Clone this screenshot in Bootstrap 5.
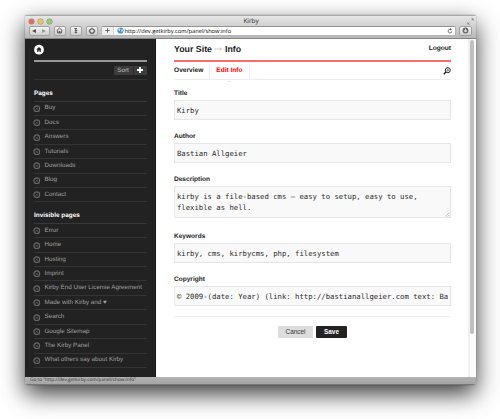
<!DOCTYPE html>
<html lang="en">
<head>
<meta charset="utf-8">
<title>Kirby</title>
<link href="https://cdn.jsdelivr.net/npm/bootstrap@5.3.0/dist/css/bootstrap.min.css" rel="stylesheet">
<style>
html,body{width:500px;height:419px;overflow:hidden;background:#fff}
body{font:6.6px/1 "Liberation Sans",Arial,sans-serif;color:#222;padding:15px 24.5px 0 25px;text-rendering:geometricPrecision}
svg{display:block;flex:none}
.win{height:369.5px;border-radius:2px 2px 3px 3px;box-shadow:0 0 1px rgba(0,0,0,.75),0 9px 23px rgba(0,0,0,.78);overflow:hidden;background:#fff}
.chrome{height:23.5px;background:linear-gradient(#e6e6e6,#b8b8b8);border-bottom:1px solid #858585;border-top:.5px solid #aaa}
.titlebar{height:10px;padding:0 2px 0 3.5px}
.titlebar .ttl{font:6.4px/10px "Open Sans","Lucida Grande",sans-serif;color:#222}
.dot{width:5px;height:5px;border-radius:50%;box-shadow:0 0 0 .5px rgba(0,0,0,.35)}
.dot-r{background:#f06a5e}.dot-y{background:#f5c053}.dot-g{background:#8fce68}
.tools{height:11.5px;padding:0 3.5px 2px 3.5px}
.tbtn{height:9.5px;border:1px solid #a2a2a2;border-radius:2px;background:linear-gradient(#f4f4f4,#cfcfcf);color:#444;padding:0}
.addr{height:9.5px;background:#fff;border:1px solid #b4b4b4;border-top-color:#929292;border-radius:2px;font:5.7px/8px "Open Sans",sans-serif;color:#000}
.plus{width:12px;height:8px;background:#f0f0f0;border-right:1px solid #d0d0d0;color:#555}
.side{width:131px;background:#222;padding:5px 8.5px 0 9px;color:#a0a0a0;border-right:1px solid #161616}
.sidebar-head{height:18px;border-bottom:2px solid #999}
.sortrow{height:18.5px;border-bottom:1px solid #333}
.sort{height:9.5px;background:#3c3c3c;border-radius:1px;color:#bbb;font-size:6.2px;line-height:9.5px}
.sort .lb{width:20px;text-align:center;border-right:1px solid #2d2d2d}
.sort .pl{width:13px}
.side h2{font-size:6.4px;font-weight:700;color:#fff;margin:0;height:21.5px;padding-top:9.5px;border-bottom:1px solid #383838;line-height:7px}
.item{height:14.42px;border-bottom:1px solid #343434;font-size:6.27px;gap:4px;white-space:nowrap;padding-top:.6px}
.item svg{margin-left:-1px}
.main{padding:0 0 0 18px}
.content{width:277px}
.mhead{height:23.5px;border-bottom:2px solid #ff6a6a;padding-top:1px}
.mhead .h{font-size:8.8px;font-weight:700}
.mhead .arr{display:inline-block;margin:0 2.5px 1.8px}
.tabs{height:18px;border-bottom:1px solid #eee;font-weight:700;font-size:6.6px;padding-top:1px}
.tab2{position:relative;color:#f00;border-left:1px solid #eee;border-right:1px solid #eee;padding:0 6px;margin-left:6px;height:17px;line-height:16px;font-size:6.55px}
.tab2::after{content:"";position:absolute;left:50%;bottom:-2px;margin-left:-1.5px;border:1.5px solid transparent;border-top-color:#bbb;border-bottom:0}
.fld{height:43px}
.fld label{display:block;font-weight:700;font-size:6.55px;line-height:8px;height:11px;padding-top:.8px}
.fld .box{height:20px;border:1px solid #e6e6e6;border-radius:0;background:#f9f9f9;padding:0 2px;font:7.27px/11px "DejaVu Sans Mono",monospace;color:#2a2a2a;overflow:hidden;white-space:pre;display:flex;align-items:center;position:relative}
.fld.tall{height:57px}.fld.tall .box{height:32px}
.fld .grip{position:absolute;right:0;bottom:0}
.acts{border-top:1.5px solid #f0f0f0;margin-top:-2.5px;padding-top:9px}
.acts .btn{font-size:6.4px;line-height:12.5px;height:12.5px;padding:0;border:0;border-radius:1px}
.cancel{width:35px;background:#ddd;color:#333}.cancel:hover{background:#ddd}
.save{width:31px;background:#222;color:#fff;font-weight:700}
.track{width:7.5px;background:#fbfbfb;border-left:2px solid #f0f0f0;padding:1.5px 0 0 0}
.thumb{width:3.5px;height:294px;border-radius:2px;background:#c0c0c0}
.page{height:338.5px}
.status{height:7.5px;background:linear-gradient(#b3b3b3,#a6a6a6);font:4.75px/7px "Open Sans",sans-serif;color:#333;padding-left:5px;border-bottom:.5px solid #777}
</style>
<script src="https://cdn.jsdelivr.net/npm/bootstrap@5.3.0/dist/js/bootstrap.bundle.min.js"></script>
</head>
<body>
<svg width="0" height="0" class="position-absolute"><defs>
<symbol id="x" viewBox="0 0 8 8"><circle cx="4" cy="4" r="3.1" fill="none" stroke="#666" stroke-width="1.3"/><path d="M2.9 2.9 5.1 5.1M5.1 2.9 2.9 5.1" stroke="#666" stroke-width=".8"/></symbol>
</defs></svg>
<div class="win d-flex flex-column">
 <header class="chrome">
  <div class="titlebar d-flex align-items-center">
   <div class="d-flex" style="gap:4px"><i class="dot dot-r"></i><i class="dot dot-y"></i><i class="dot dot-g"></i></div>
   <div class="ttl flex-fill text-center pe-3">Kirby</div>
   <svg width="7" height="7" viewBox="0 0 7 7"><path d="M4 .5h2.5V3zM.5 4v2.5H3z" fill="#777"/><path d="M6 1 1 6" stroke="#888" stroke-width=".6" stroke-dasharray="2 2.8 2"/></svg>
  </div>
  <div class="tools d-flex align-items-center">
   <div class="tbtn d-flex align-items-center justify-content-around" style="width:21.5px"><svg width="4" height="4" viewBox="0 0 4 4"><path d="M4 0v4L0 2z" fill="#555"/></svg><svg width="4" height="4" viewBox="0 0 4 4"><path d="M0 0v4l4-2z" fill="#999"/></svg></div>
   <div class="tbtn d-flex align-items-center justify-content-center" style="width:12.5px;margin-left:3.5px"><svg width="7" height="7" viewBox="0 0 7 7"><path d="M.6 3.7 3.5 1l2.9 2.7M1.6 3.3V6h3.8V3.3M3 6V4.5h1V6" fill="none" stroke="#444" stroke-width=".8"/></svg></div>
   <div class="tbtn d-flex align-items-center justify-content-center" style="width:12.5px;margin-left:3.5px"><svg width="6" height="7" viewBox="0 0 6 7"><path d="M1.4 1.5h2.4L1.9 3.4h2L2 5.7h2.2" fill="none" stroke="#444" stroke-width=".9"/></svg></div>
   <div class="tbtn d-flex align-items-center justify-content-center" style="width:12px;margin-left:3.5px"><svg width="8" height="8" viewBox="0 0 8 8"><circle cx="4" cy="4" r="2.3" fill="none" stroke="#555" stroke-width="1.1"/><path d="M4 .6v1M4 6.4v1M.6 4h1M6.4 4h1" stroke="#555" stroke-width=".8"/></svg></div>
   <div class="addr flex-fill d-flex align-items-center" style="margin-left:3.5px">
    <div class="plus d-flex align-items-center justify-content-center"><svg width="5" height="5" viewBox="0 0 5 5"><path d="M2.5.3v4.4M.3 2.5h4.4" stroke="#555" stroke-width=".9"/></svg></div>
    <svg width="7" height="7" viewBox="0 0 7 7" style="margin:0 1px 0 2.5px"><circle cx="3.5" cy="3.5" r="3.1" fill="#4b8fd0"/><path d="M1.2 1.8 3 1.2l.5 1.4-1.2 1.6zM4.3 2.4l1.7.2-.4 2-1.2.6z" fill="#d7e8f6"/></svg>
    <span class="flex-fill">http://dev.getkirby.com/panel/show:info</span>
    <svg width="6" height="6" viewBox="0 0 6 6" style="margin-right:2px"><path d="M4.9 3.3A1.9 1.9 0 1 1 3.4 1.2" fill="none" stroke="#555" stroke-width=".8"/><path d="M3 0l2 1.3L3 2.6z" fill="#555"/></svg>
   </div>
   <div class="tbtn d-flex align-items-center justify-content-center" style="width:13px;margin-left:3.5px"><svg width="7" height="7" viewBox="0 0 7 7"><circle cx="3.5" cy="3.5" r="2.9" fill="#666"/><path d="M3.5 1.7v2.8M2.3 3.7l1.2 1.4 1.2-1.4z" stroke="#eee" stroke-width=".8" fill="#eee"/></svg></div>
  </div>
 </header>
 <div class="page d-flex">
  <nav class="side flex-shrink-0">
   <div class="sidebar-head"><svg width="10" height="12" viewBox="0 0 10 12"><circle cx="5" cy="5.7" r="4.9" fill="#fff"/><path d="M5 3.1 2.4 5.6h.8v2.3h1.2V6.4h1.2v1.5h1.2V5.6h.8z" fill="#222"/></svg></div>
   <div class="sortrow d-flex align-items-center justify-content-end"><div class="sort d-flex"><span class="lb">Sort</span><span class="pl d-flex align-items-center justify-content-center"><svg width="6" height="6" viewBox="0 0 6 6"><path d="M3 0v6M0 3h6" stroke="#fff" stroke-width="1.8"/></svg></span></div></div>
   <h2>Pages</h2>
   <div class="item d-flex align-items-center"><svg width="7.5" height="7.5"><use href="#x"/></svg>Buy</div>
   <div class="item d-flex align-items-center"><svg width="7.5" height="7.5"><use href="#x"/></svg>Docs</div>
   <div class="item d-flex align-items-center"><svg width="7.5" height="7.5"><use href="#x"/></svg>Answers</div>
   <div class="item d-flex align-items-center"><svg width="7.5" height="7.5"><use href="#x"/></svg>Tutorials</div>
   <div class="item d-flex align-items-center"><svg width="7.5" height="7.5"><use href="#x"/></svg>Downloads</div>
   <div class="item d-flex align-items-center"><svg width="7.5" height="7.5"><use href="#x"/></svg>Blog</div>
   <div class="item d-flex align-items-center"><svg width="7.5" height="7.5"><use href="#x"/></svg>Contact</div>
   <h2>Invisible pages</h2>
   <div class="item d-flex align-items-center"><svg width="7.5" height="7.5"><use href="#x"/></svg>Error</div>
   <div class="item d-flex align-items-center"><svg width="7.5" height="7.5"><use href="#x"/></svg>Home</div>
   <div class="item d-flex align-items-center"><svg width="7.5" height="7.5"><use href="#x"/></svg>Hosting</div>
   <div class="item d-flex align-items-center"><svg width="7.5" height="7.5"><use href="#x"/></svg>Imprint</div>
   <div class="item d-flex align-items-center"><svg width="7.5" height="7.5"><use href="#x"/></svg>Kirby End User License Agreement</div>
   <div class="item d-flex align-items-center"><svg width="7.5" height="7.5"><use href="#x"/></svg>Made with Kirby and ♥</div>
   <div class="item d-flex align-items-center"><svg width="7.5" height="7.5"><use href="#x"/></svg>Search</div>
   <div class="item d-flex align-items-center"><svg width="7.5" height="7.5"><use href="#x"/></svg>Google Sitemap</div>
   <div class="item d-flex align-items-center"><svg width="7.5" height="7.5"><use href="#x"/></svg>The Kirby Panel</div>
   <div class="item d-flex align-items-center"><svg width="7.5" height="7.5"><use href="#x"/></svg>What others say about Kirby</div>
  </nav>
  <main class="main flex-fill">
   <div class="content">
    <div class="mhead d-flex align-items-center justify-content-between"><span class="h">Your Site<svg class="arr" width="8" height="4" viewBox="0 0 8 4"><path d="M0 2h7M5.5.5 7.3 2 5.5 3.5" fill="none" stroke="#bbb" stroke-width=".7"/></svg>Info</span><b>Logout</b></div>
    <div class="tabs d-flex align-items-center"><span>Overview</span><span class="tab2">Edit Info</span><svg class="ms-auto" width="8" height="8" viewBox="0 0 8 8"><circle cx="4.8" cy="3.2" r="2.5" fill="none" stroke="#222"/><path d="M3 5 .7 7.3" stroke="#222" stroke-width="1.3"/><path d="M3.5 3.2h2.6M4.8 1.9v2.6" stroke="#555" stroke-width=".7"/></svg></div>
    <form style="padding-top:9px">
     <div class="fld"><label>Title</label><div class="box">Kirby</div></div>
     <div class="fld"><label>Author</label><div class="box">Bastian Allgeier</div></div>
     <div class="fld tall"><label>Description</label><div class="box">kirby is a file-based cms – easy to setup, easy to use,
flexible as hell.<svg class="grip" width="5" height="5" viewBox="0 0 5 5"><path d="M.5 4.5l4-4M2.7 4.5l1.8-1.8" stroke="#999" stroke-width=".6"/></svg></div></div>
     <div class="fld"><label>Keywords</label><div class="box">kirby, cms, kirbycms, php, filesystem</div></div>
     <div class="fld"><label>Copyright</label><div class="box">© 2009-(date: Year) (link: http://bastianallgeier.com text: Ba</div></div>
     <div class="acts d-flex justify-content-center" style="gap:3px"><button type="button" class="btn cancel">Cancel</button><button type="button" class="btn save">Save</button></div>
    </form>
   </div>
  </main>
  <div class="track flex-shrink-0"><div class="thumb"></div></div>
 </div>
 <footer class="status">Go to “http://dev.getkirby.com/panel/show:info”</footer>
</div>
</body>
</html>
